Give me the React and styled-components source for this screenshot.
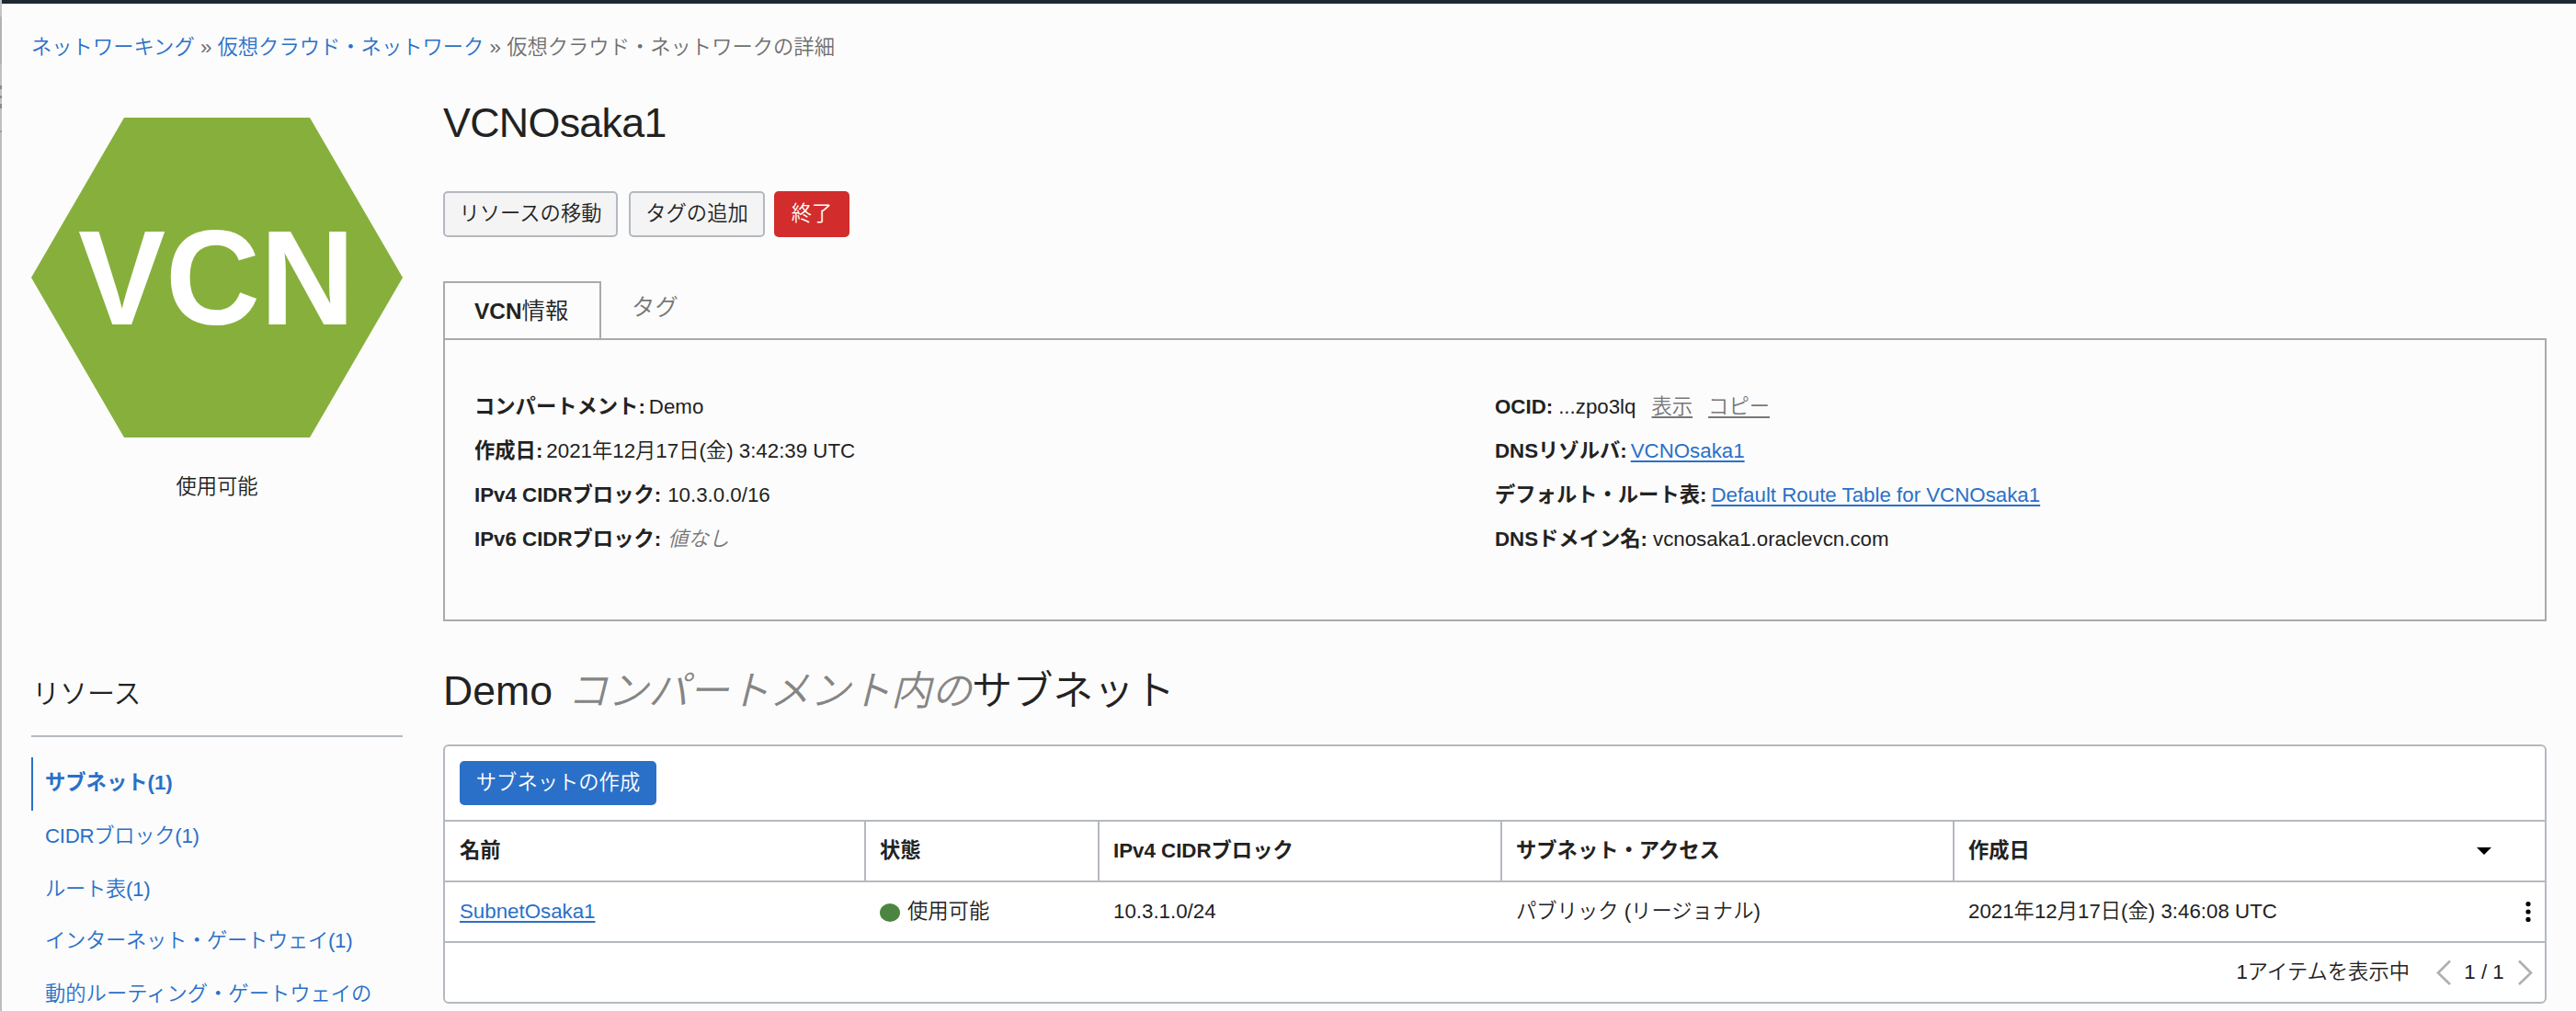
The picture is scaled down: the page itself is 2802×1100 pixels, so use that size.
import React from "react";
import styled, { createGlobalStyle, css } from "styled-components";

const link = "#2a70c8";
const line = "#b4b9c0";
const ink = "#222";

const GlobalStyle = createGlobalStyle`
  *, *::before, *::after { box-sizing: border-box; }
  html, body { margin: 0; background: #fcfcfc; overflow: hidden; }
  body {
    font-family: "Liberation Sans", "Noto Sans CJK JP", sans-serif;
    font-size: 22.3px;
    font-weight: 350;
    line-height: 48px;
    color: ${ink};
  }
  a { color: ${link}; text-decoration: none; }
  h1, h2, h3, p { margin: 0; padding: 0; font-weight: 350; }
`;

const Page = styled.div`
  height: 1100px;
  padding-left: 2px;
  overflow: hidden;
  white-space: nowrap;
  background:
    linear-gradient(
      #c4c4c4 18px, #b2b2b2 18px 70px, #c0c0c0 70px 93px,
      #8a8a8a 93px 97px, #c0c0c0 97px 104px, #8a8a8a 104px 107px,
      #c0c0c0 107px 113px, #8a8a8a 113px 118px, #c0c0c0 118px 142px,
      #9c9c9c 142px 144px, #bdbdbd 144px
    ) left top / 2px 100% no-repeat;
`;

const TopBar = styled.div`
  height: 4px;
  background: #1f2735;
`;

const Breadcrumb = styled.nav`
  height: 104px;
  padding: 24px 0 0 32px;
  color: #6f6f6f;
`;

const Columns = styled.div`
  display: grid;
  grid-template-columns: 404px 2288px;
  column-gap: 44px;
  padding-left: 32px;
`;

const Side = styled.aside`
  display: flex;
  flex-direction: column;
  padding-top: 20px;
`;

const Hexagon = styled.svg`
  display: block;
  width: 404px;
  height: 348px;
`;

const Status = styled.p`
  height: 105px;
  margin-top: 30px;
  text-align: center;
`;

const ResourcesTitle = styled.h3`
  height: 191px;
  padding: 120px 0 0 1px;
  margin-bottom: 22px;
  font-size: 30px;
  border-bottom: 2px solid ${line};
`;

const NavItem = styled.a`
  display: block;
  height: ${(p) => p.$h || 58}px;
  padding: 4px 0 0 15px;
  ${(p) => p.$snug && "letter-spacing: -0.3px;"}
  ${(p) =>
    p.$active &&
    css`
      padding-left: 13px;
      font-weight: 700;
      border-left: 2px solid ${link};
    `}
`;

const Main = styled.main`
  display: flex;
  flex-direction: column;
`;

const Title = styled.h1`
  height: 100px;
  font-size: 44.8px;
  letter-spacing: -0.7px;
  line-height: 50px;
`;

const Actions = styled.div`
  display: flex;
  height: 98px;
`;

const Button = styled.button`
  flex: none;
  width: ${(p) => p.$w}px;
  height: ${(p) => p.$h || 50}px;
  margin-right: ${(p) => p.$gap || 0}px;
  padding: 0;
  font: inherit;
  line-height: 1;
  color: ${(p) => (p.$bg ? "#fff" : ink)};
  background: ${(p) => p.$bg || "#f4f4f4"};
  border: ${(p) => (p.$bg ? "0" : `2px solid ${line}`)};
  border-radius: 5px;
`;

const Tabs = styled.div`
  display: flex;
  height: 62px;
  font-size: 25.4px;
`;

const Tab = styled.div`
  line-height: 56px;
  padding: ${(p) => (p.$active ? "2px 32px 0" : "0 33px")};
  color: ${(p) => (p.$active ? ink : "#777")};
  ${(p) =>
    p.$active &&
    css`
      width: 172px;
      border: 2px solid #aaa;
      border-bottom: 0;
    `}
`;

const TabLatin = styled.span`
  font-weight: 700;
  font-size: 24.4px;
`;

const InfoPanel = styled.section`
  display: grid;
  grid-template-columns: 1110px 1fr;
  height: 308px;
  padding: 49px 32px 0;
  border: 2px solid #aaa;
`;

const Field = styled.div`
  height: 48px;
`;

const Label = styled.b`
  margin-right: ${(p) => p.$gap || 4}px;
`;

const TextLink = styled.a`
  text-decoration: underline;
  text-decoration-thickness: 2px;
  text-underline-offset: 3px;
`;

const QuietLink = styled(TextLink)`
  color: #777;
  margin-left: 17px;
`;

const Empty = styled.i`
  color: #777;
`;

const SubnetTitle = styled.h2`
  height: 134px;
  padding-top: 46px;
  font-size: 44.6px;
  line-height: 60px;
`;

const Within = styled.i`
  margin-left: 16px;
  font-size: 44px;
  color: #858585;
`;

const TitleKana = styled.span`
  font-size: 44.2px;
`;

const Card = styled.section`
  height: 282px;
  background: #fff;
  border: 2px solid ${line};
  border-radius: 6px;
`;

const CardToolbar = styled.div`
  display: flex;
  height: 80px;
  padding: 16px 16px 0;
`;

const Row = styled.div`
  display: grid;
  grid-template-columns: 456px 254px 438px 492px 1fr;
  height: 66px;
  border-top: 2px solid ${line};
  font-weight: ${(p) => (p.$head ? 700 : 350)};
`;

const Cell = styled.div`
  display: flex;
  align-items: center;
  height: 64px;
  padding-left: ${(p) => (p.$first ? 16 : 17)}px;
  ${(p) =>
    p.$rule &&
    css`
      padding-left: 15px;
      border-left: 2px solid ${line};
    `}
`;

const Dot = styled.span`
  width: 22px;
  height: 20px;
  margin: 2px 8px 0 0;
  border-radius: 50%;
  background: #4c8540;
`;

const Glyph = styled.svg`
  display: block;
  flex: none;
  width: ${(p) => p.$w}px;
  height: ${(p) => p.$h}px;
  margin-left: ${(p) => p.$left || "0"};
  margin-right: ${(p) => p.$right || 0}px;
`;

const Footer = styled.div`
  display: flex;
  align-items: center;
  justify-content: flex-end;
  height: 66px;
  border-top: 2px solid ${line};
`;

const PageCount = styled.span`
  width: 44px;
  margin: 0 15px 0 14px;
  text-align: center;
`;

const Chevron = ({ d, left, right }) => (
  <Glyph viewBox="0 0 16 28" $w={16} $h={28} $left={left} $right={right}>
    <path d={d} fill="none" stroke="#afafaf" strokeWidth="2.6" />
  </Glyph>
);

const nav = [
  { text: "サブネット(1)", active: true },
  { text: "CIDRブロック(1)", snug: true },
  { text: "ルート表(1)", h: 56, snug: true },
  { text: "インターネット・ゲートウェイ(1)", snug: true },
  { text: "動的ルーティング・ゲートウェイの" },
];

const headings = ["名前", "状態", "IPv4 CIDRブロック", "サブネット・アクセス", "作成日"];

export default function App() {
  return (
    <Page>
      <GlobalStyle />
      <TopBar />
      <Breadcrumb>
        <a href="#n">ネットワーキング</a> » <a href="#v">仮想クラウド・ネットワーク</a> »
        仮想クラウド・ネットワークの詳細
      </Breadcrumb>
      <Columns>
        <Side>
          <Hexagon viewBox="0 0 404 348">
            <polygon points="101,0 303,0 404,174 303,348 101,348 0,174" fill="#86b03b" />
            <text
              x="51"
              y="225"
              textLength="301"
              lengthAdjust="spacingAndGlyphs"
              fontSize="146"
              fontWeight="700"
              fill="#fff"
            >
              VCN
            </text>
          </Hexagon>
          <Status>使用可能</Status>
          <ResourcesTitle>リソース</ResourcesTitle>
          {nav.map((n) => (
            <NavItem key={n.text} href="#r" $active={n.active} $h={n.h} $snug={n.snug}>
              {n.text}
            </NavItem>
          ))}
        </Side>
        <Main>
          <Title>VCNOsaka1</Title>
          <Actions>
            <Button $w={190} $gap={12}>リソースの移動</Button>
            <Button $w={148} $gap={10}>タグの追加</Button>
            <Button $w={82} $bg="#d22c2c">終了</Button>
          </Actions>
          <Tabs>
            <Tab $active>
              <TabLatin>VCN</TabLatin>情報
            </Tab>
            <Tab>タグ</Tab>
          </Tabs>
          <InfoPanel>
            <div>
              <Field><Label>コンパートメント:</Label>Demo</Field>
              <Field><Label>作成日:</Label>2021年12月17日(金) 3:42:39 UTC</Field>
              <Field><Label $gap={7}>IPv4 CIDRブロック:</Label>10.3.0.0/16</Field>
              <Field><Label $gap={7}>IPv6 CIDRブロック:</Label><Empty>値なし</Empty></Field>
            </div>
            <div>
              <Field>
                <Label $gap={6}>OCID:</Label>...zpo3lq
                <QuietLink href="#s">表示</QuietLink>
                <QuietLink href="#c">コピー</QuietLink>
              </Field>
              <Field><Label>DNSリゾルバ:</Label><TextLink href="#d">VCNOsaka1</TextLink></Field>
              <Field>
                <Label $gap={5}>デフォルト・ルート表:</Label>
                <TextLink href="#t">Default Route Table for VCNOsaka1</TextLink>
              </Field>
              <Field><Label $gap={6}>DNSドメイン名:</Label>vcnosaka1.oraclevcn.com</Field>
            </div>
          </InfoPanel>
          <SubnetTitle>
            Demo<Within>コンパートメント内の</Within><TitleKana>サブネット</TitleKana>
          </SubnetTitle>
          <Card>
            <CardToolbar>
              <Button $w={214} $h={48} $bg={link}>サブネットの作成</Button>
            </CardToolbar>
            <Row $head>
              {headings.map((h, i) => (
                <Cell key={h} $first={i === 0} $rule={i > 0}>
                  {h}
                  {i === 4 && (
                    <Glyph viewBox="0 0 16 8" $w={16} $h={8} $left="auto" $right={58}>
                      <path d="M0 0h16L8 8z" fill="#000" />
                    </Glyph>
                  )}
                </Cell>
              ))}
            </Row>
            <Row>
              <Cell $first><TextLink href="#subnet">SubnetOsaka1</TextLink></Cell>
              <Cell><Dot />使用可能</Cell>
              <Cell>10.3.1.0/24</Cell>
              <Cell>パブリック (リージョナル)</Cell>
              <Cell>
                2021年12月17日(金) 3:46:08 UTC
                <Glyph viewBox="0 0 6 24" $w={6} $h={24} $left="auto" $right={15}>
                  <circle cx="3" cy="3.6" r="2.6" />
                  <circle cx="3" cy="12" r="2.6" />
                  <circle cx="3" cy="20.4" r="2.6" />
                </Glyph>
              </Cell>
            </Row>
            <Footer>
              1アイテムを表示中
              <Chevron left="29px" d="M15 1.5 2 14.5 15 27" />
              <PageCount>1 / 1</PageCount>
              <Chevron right={13} d="M1 1.5 14 14.5 1 27" />
            </Footer>
          </Card>
        </Main>
      </Columns>
    </Page>
  );
}
